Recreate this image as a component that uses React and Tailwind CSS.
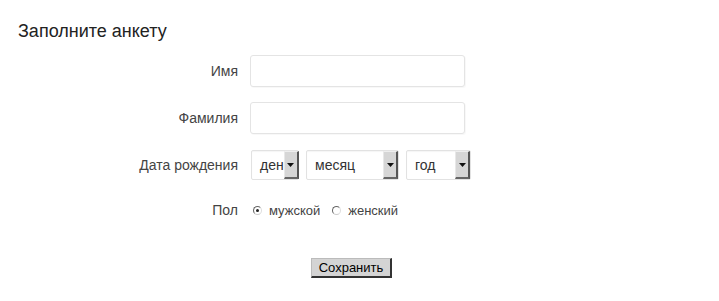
const font = { fontFamily: '"Liberation Sans", Arial, sans-serif' };

function Arrow() {
  return (
    <span className="flex h-full w-[15px] shrink-0 items-center justify-center border-r-2 border-b-2 border-l border-t border-r-[#555] border-b-[#666] border-l-[#e8e8e8] border-t-[#eee] bg-[#d6d6d6]">
      <svg width="7" height="4" viewBox="0 0 7 4">
        <path d="M0 0h7L3.5 4z" fill="#111" />
      </svg>
    </span>
  );
}

function FakeSelect({ label, width }) {
  return (
    <div
      className={`flex h-[30px] items-stretch rounded-[2px] border border-[#e2e2e2] bg-white pl-[8px] shadow-[inset_0_1px_1px_rgba(0,0,0,0.04)] ${width}`}
    >
      <span className="flex flex-1 items-center text-[14px] text-[#333]">{label}</span>
      <Arrow />
    </div>
  );
}

function Radio({ checked }) {
  return (
    <span className="flex h-[9px] w-[9px] items-center justify-center rounded-full border border-[#666] border-r-[#ddd] border-b-[#ccc] bg-white">
      {checked && <span className="h-[3px] w-[3px] rounded-full bg-[#222]" />}
    </span>
  );
}

function Row({ label, children, className = "" }) {
  return (
    <div className={`flex items-center ${className}`}>
      <div className="w-[238px] text-right text-[14px] text-[#444]">{label}</div>
      <div className="ml-[12px] flex items-center">{children}</div>
    </div>
  );
}

export default function App() {
  return (
    <div className="h-[301px] w-[719px] bg-white" style={font}>
      <h2 className="pl-[18px] pt-[21px] text-[18px] leading-[20px] text-[#222]">Заполните анкету</h2>

      <Row label="Имя" className="mt-[14px]">
        <div className="h-[32px] w-[215px] rounded-[3px] border border-[#e4e4e4] bg-white shadow-[1px_1px_1px_rgba(0,0,0,0.03)]" />
      </Row>

      <Row label="Фамилия" className="mt-[15px]">
        <div className="h-[32px] w-[215px] rounded-[3px] border border-[#e4e4e4] bg-white shadow-[1px_1px_1px_rgba(0,0,0,0.03)]" />
      </Row>

      <Row label="Дата рождения" className="mt-[16px]">
        <div className="ml-[1px] flex gap-[7px]">
          <FakeSelect label="ден" width="w-[48px] pl-[6px]" />
          <FakeSelect label="месяц" width="w-[93px]" />
          <FakeSelect label="год" width="w-[65px]" />
        </div>
      </Row>

      <Row label="Пол" className="mt-[20px]">
        <div className="flex items-center text-[13px] text-[#444]">
          <span className="ml-[3px]"><Radio checked /></span>
          <span className="ml-[7px]">мужской</span>
          <span className="ml-[12px]"><Radio /></span>
          <span className="ml-[7px]">женский</span>
        </div>
      </Row>

      <div className="mt-[37px] flex pl-[311px]">
        <button className="h-[20px] w-[81px] border border-t-[#bbb] border-l-[#bbb] border-r-2 border-b-2 border-r-[#333] border-b-[#333] bg-[#d4d4d4] text-[13px] leading-none text-black">
          Сохранить
        </button>
      </div>
    </div>
  );
}
